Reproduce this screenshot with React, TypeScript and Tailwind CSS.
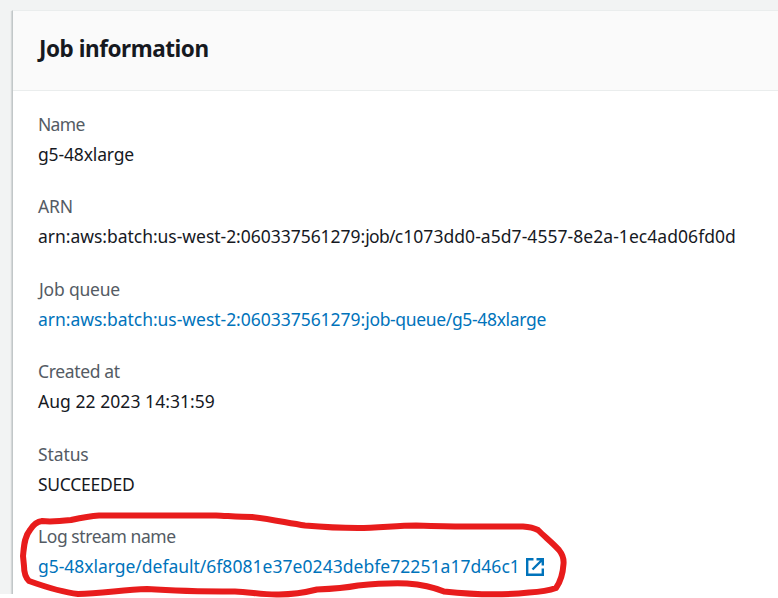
type Part = { text: string; spacing: string };
type Field = { label: string; labelSpacing: string; parts: Part[]; link?: boolean; external?: boolean };

const fields: Field[] = [
  { label: "Name", labelSpacing: "tracking-[-0.7px]", parts: [{ text: "g5-48xlarge", spacing: "tracking-[-0.15px]" }] },
  {
    label: "ARN",
    labelSpacing: "tracking-[-0.1px]",
    parts: [
      { text: "arn:aws:batch:us-west-2:060337561279:", spacing: "tracking-[-0.03px]" },
      { text: "job/", spacing: "tracking-[-0.7px]" },
      { text: "c1073dd0-a5d7-4557-8e2a-1ec4ad06fd0d", spacing: "tracking-[0.05px]" },
    ],
  },
  {
    label: "Job queue",
    labelSpacing: "tracking-[-0.2px] pl-[1px]",
    parts: [
      { text: "arn:aws:batch:us-west-2:060337561279:", spacing: "tracking-[-0.03px]" },
      { text: "job-queue/g5-48xlarge", spacing: "tracking-[-0.34px]" },
    ],
    link: true,
  },
  { label: "Created at", labelSpacing: "tracking-[-0.35px]", parts: [{ text: "Aug 22 2023 14:31:59", spacing: "tracking-[0.05px]" }] },
  { label: "Status", labelSpacing: "tracking-[-0.1px]", parts: [{ text: "SUCCEEDED", spacing: "tracking-[-0.27px]" }] },
  {
    label: "Log stream name",
    labelSpacing: "tracking-[-0.43px]",
    parts: [
      { text: "g5-48xlarge/default/", spacing: "tracking-[-0.03px]" },
      { text: "6f8081e37e0243debfe72251a17d46c1", spacing: "tracking-[0.045px]" },
    ],
    link: true,
    external: true,
  },
];

function ExternalIcon() {
  return (
    <svg className="ml-[6.5px] h-[18px] w-[18px] shrink-0" viewBox="0 0 18 18" fill="none" stroke="#0073bb" strokeWidth="2.4">
      <path d="M7.5 1.2H1.2v15.6h15.6v-6.3" />
      <path d="M10.5 1.2h6.3v6.3M16.5 1.5 6.5 11.5" />
    </svg>
  );
}

function Annotation() {
  return (
    <svg className="absolute top-0 left-0 h-[598px] w-[778px]" viewBox="0 0 778 598" fill="none" stroke="#e81c1c" strokeWidth="6" strokeLinecap="round" strokeLinejoin="round">
      <path d="M42 521C51 522 62 521 71 520C80 518 90 516 99 515.5H216C228 516 240 517 252 517C270 519 288 523 305 525.5C322 527 339 528 358 528C378 528 397 525.5 416 525.5C432 526 448 526.5 464 526.5H523C530 527 534 528 538 530C545 537 553 543 559 550C563 555 564 559 563.5 564C563 572 561 581 556 588C548 591 539 592 529 592.5C502 595.5 472 594.5 444 591.5C433 587 421 584.5 407 583.5C392 583 373 584 358 585.5C345 588 330 589 317 589.5C305 592.5 292 594.5 279 594.5C264 595 250 592 235 591.5C206 591.5 175 591 147 589C123 589.5 101 594 78 594C60 592 43 586 29 581C25 577 24 572 24 566L23 556C24 547 24 537 30 530C33 525 37 521.5 42 521" />
    </svg>
  );
}

export default function App() {
  return (
    <div className="relative h-[598px] w-[778px] overflow-hidden bg-white font-['Noto_Sans',sans-serif] text-[17.5px] leading-[27.5px]">
      <div className="h-[594px] overflow-hidden bg-[#f2f3f3] pt-[10px] pl-[12px]">
        <section className="h-full border-t border-l border-t-[#eaeded] border-l-[#c2c7c8] bg-white shadow-[-1px_1px_1px_rgba(0,28,36,0.12)]">
          <header className="flex h-[80px] items-center border-b border-[#eaeded] bg-[#fafafa] pb-[3px] pl-[26px]">
            <h2 className="text-[22.5px] leading-[30px] font-bold tracking-[-0.45px] whitespace-nowrap text-[#16191f]">Job information</h2>
          </header>
          <dl className="flex flex-col gap-[25px] pt-[19.9px] pl-[25px]">
            {fields.map((f) => (
              <div key={f.label} className="flex flex-col gap-[2.5px] whitespace-nowrap">
                <dt className={`${f.labelSpacing} w-fit text-[#545b64]`}>{f.label}</dt>
                <dd className={`flex w-fit items-center ${f.link ? "text-[#0073bb]" : "text-[#16191f]"}`}>
                  <span>
                    {f.parts.map((p) => (
                      <span key={p.text} className={p.spacing}>{p.text}</span>
                    ))}
                  </span>
                  {f.external && <ExternalIcon />}
                </dd>
              </div>
            ))}
          </dl>
        </section>
      </div>
      <Annotation />
    </div>
  );
}
